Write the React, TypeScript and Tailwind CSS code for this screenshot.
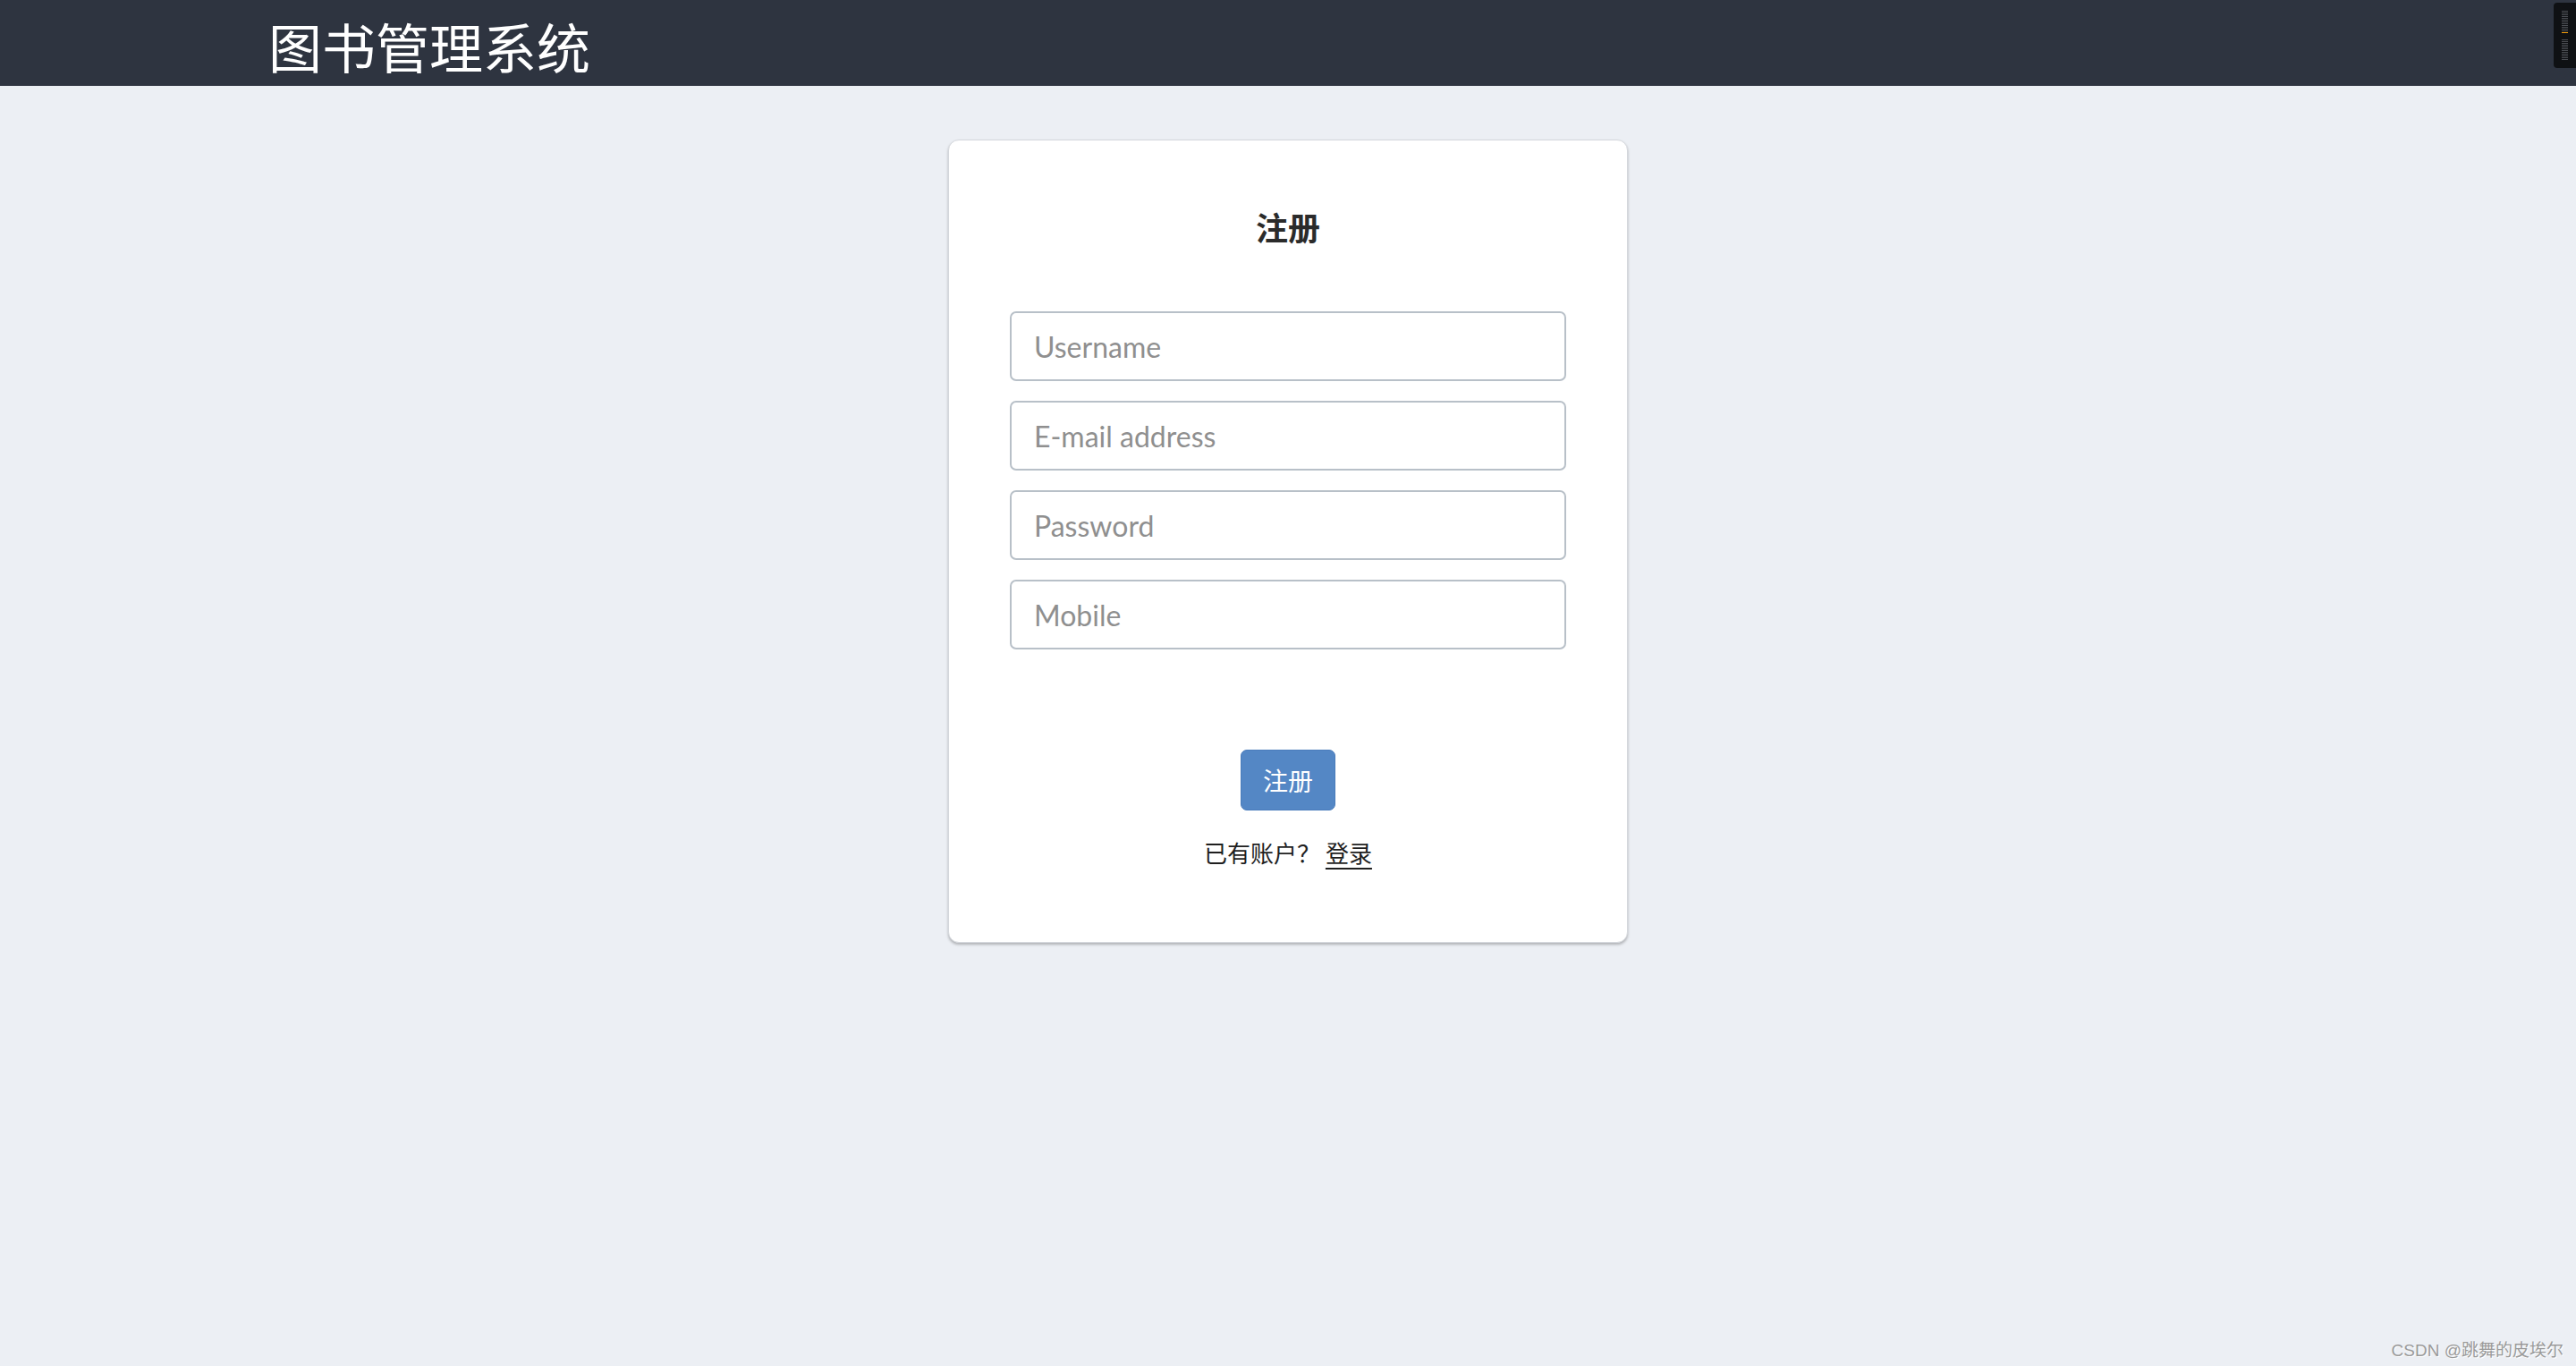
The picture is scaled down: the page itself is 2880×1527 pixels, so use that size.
import React from "react";

const cjk = { fontFamily: '"Noto Sans CJK SC", "Noto Sans", sans-serif' };
const latin = { fontFamily: 'Lato, "Noto Sans CJK SC", sans-serif' };

const fields = ["Username", "E-mail address", "Password", "Mobile"];

function SideWidget() {
  const top = [12, 14, 16, 18, 20, 22, 24, 26, 28, 30, 32, 34];
  const bottom = [44, 46, 48, 50, 52, 54, 56, 58, 60, 62, 64, 66];
  return (
    <div className="absolute right-0 top-[3px] h-[73px] w-[25px] rounded-l-[4px] bg-[#0f1114]">
      <svg width="25" height="73" viewBox="0 0 25 73" className="block">
        {top.map((y) => (
          <rect key={"t" + y} x="9" y={y - 3} width="7" height="1" fill="#4a4d52" />
        ))}
        <rect x="9" y="33" width="7" height="1" fill="#f59e0b" />
        {bottom.map((y) => (
          <rect key={"b" + y} x="9" y={y - 3} width="7" height="1" fill="#4a4d52" />
        ))}
      </svg>
    </div>
  );
}

export default function App() {
  return (
    <div className="relative min-h-[1527px] w-full bg-[#eceff4]">
      <header className="relative flex h-[96px] items-center bg-[#2e3440] pl-[300px]">
        <h1 className="pt-[6px] text-[60px] leading-none font-normal text-white" style={cjk}>
          图书管理系统
        </h1>
        <SideWidget />
      </header>

      <main className="flex justify-center pt-[60px]">
        <div className="flex w-[760px] flex-col items-center rounded-[12px] border border-[#d4d7dc] bg-white px-[68px] pt-[78px] pb-[80px] shadow-[0_2px_3px_rgba(0,0,0,0.25)]">
          <h2 className="text-[36px] leading-[36px] font-bold text-[#2b2b2b]" style={cjk}>
            注册
          </h2>

          <div className="mt-[77px] flex w-full flex-col gap-[22px]">
            {fields.map((f) => (
              <input
                key={f}
                type="text"
                placeholder={f}
                className="h-[78px] w-full rounded-[7px] border-2 border-[#b8c0c8] bg-white px-[25px] text-[32px] text-[#333] outline-none placeholder:text-[#8f8f8f]"
                style={latin}
              />
            ))}
          </div>

          <button
            type="button"
            className="mt-[112px] flex h-[68px] w-[106px] items-center justify-center rounded-[7px] border border-[#4a7cbb] bg-[#5487c5] text-[28px] text-white"
            style={cjk}
          >
            注册
          </button>

          <p className="mt-[32px] mb-[5px] text-[26px] leading-[30px] text-[#1f1f1f]" style={cjk}>
            已有账户？ <a href="#" className="text-[#1f1f1f] underline decoration-2 underline-offset-[6px]">登录</a>
          </p>
        </div>
      </main>

      <div
        className="absolute right-[14px] bottom-[3px] text-[19px] text-[#9a9a9a] [text-shadow:1px_1px_0_#ffffff]"
        style={{ fontFamily: '"Liberation Sans", "Noto Sans CJK SC", sans-serif' }}
      >
        CSDN @跳舞的皮埃尔
      </div>
    </div>
  );
}
